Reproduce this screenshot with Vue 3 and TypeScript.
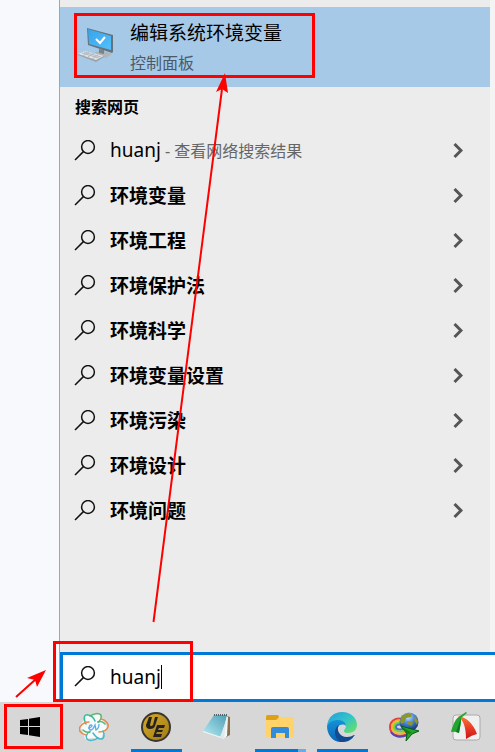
<script setup lang="ts">
import { ref } from 'vue'

interface Suggestion {
  text: string
  note?: string
}

const query = ref('huanj')

const suggestions: Suggestion[] = [
  { text: 'huanj', note: '查看网络搜索结果' },
  { text: '环境变量' },
  { text: '环境工程' },
  { text: '环境保护法' },
  { text: '环境科学' },
  { text: '环境变量设置' },
  { text: '环境污染' },
  { text: '环境设计' },
  { text: '环境问题' },
]
</script>

<template>
  <div class="desktop">
    <main class="workspace">
      <div class="backdrop"></div>
      <section class="panel">
        <div class="results">
          <button class="best" type="button">
            <svg class="best-icon" viewBox="0 0 38 38" aria-hidden="true">
              <defs>
                <linearGradient id="screen" x1="0" y1="0" x2="1" y2="1">
                  <stop offset="0" stop-color="#35a4ec" />
                  <stop offset="1" stop-color="#55c0fa" />
                </linearGradient>
              </defs>
              <path d="M17 24l8-1 9 3-6 4-10-2z" fill="#aeb6bc" />
              <path d="M21 21l5 1v4l-5-1z" fill="#77848d" />
              <path d="M9 0l26 7v17l-1 1L10 17z" fill="#66737d" />
              <path d="M10 1l23 7v14L11 16z" fill="url(#screen)" />
              <path d="M18 11l4 4 5-6" fill="none" stroke="#fff" stroke-width="2" />
              <path d="M0 26l7-3 19 5-8 5z" fill="#dfe3e6" />
              <path d="M0 26l18 6 8-4v1l-8 5L0 27z" fill="#9aa1a8" />
              <path d="M4 25l17 5M6 24l17 5M5 28l6-4M10 29l6-4M14 31l6-4" stroke="#b3b9be" stroke-width="1" fill="none" />
            </svg>
            <span class="best-text">
              <span class="best-title">编辑系统环境变量</span>
              <span class="best-kind">控制面板</span>
            </span>
          </button>
          <h2 class="heading">搜索网页</h2>
          <ul class="list">
            <li v-for="item in suggestions" :key="item.text" class="row">
              <button class="suggestion" type="button">
                <svg class="glass" viewBox="0 0 22 22" aria-hidden="true">
                  <circle cx="14" cy="7" r="6.400" />
                  <path d="M9.400 11.600L1 20" />
                </svg>
                <span v-if="item.note" class="typed">{{ item.text }}<span class="note"> - {{ item.note }}</span></span>
                <span v-else class="completed">{{ item.text }}</span>
              </button>
              <button class="expand" type="button" :aria-label="item.text">
                <svg viewBox="0 0 10 16" aria-hidden="true"><path d="M1.500 1L8 7.500 1.500 14" /></svg>
              </button>
            </li>
          </ul>
        </div>
        <label class="search">
          <svg class="glass" viewBox="0 0 22 22" aria-hidden="true">
            <circle cx="14" cy="7" r="6.400" />
            <path d="M9.400 11.600L1 20" />
          </svg>
          <input v-model="query" class="field" type="text" />
          <span class="caret"></span>
        </label>
      </section>
    </main>

    <nav class="taskbar">
      <button class="start" type="button" aria-label="Start">
        <svg width="20" height="20" viewBox="0 0 20 20" aria-hidden="true">
          <path d="M0 3l8-1v7H0zM9 1.800L20 0v9H9zM0 10h8v8l-8-1zM9 10h11v10L9 18.200z" />
        </svg>
      </button>

      <button class="app" type="button" aria-label="EV">
        <svg viewBox="0 0 30 30" aria-hidden="true">
          <path d="M6 3l7 1 7-2 4 6 4 7-4 6-2 6-8-1-8 1-2-7-3-6 4-6z" fill="#f6fafa" />
          <g fill="none" stroke-width="1.500" stroke-linecap="round">
            <path d="M7 12C4 6 5 2 9 3c3 0 6 3 7 6" stroke="#39b99c" />
            <path d="M11 4c4-3 9-3 11-1 1 3-1 6-3 7" stroke="#55b86b" />
            <path d="M22 7c5 1 8 5 7 8s-5 5-9 5" stroke="#e58a4a" />
            <path d="M24 19c2 4 1 8-2 8s-6-3-8-6" stroke="#45b9c9" />
            <path d="M19 26c-4 3-9 3-11 1s0-6 3-8" stroke="#45b5cf" />
            <path d="M7 23c-5-1-8-5-6-8s5-5 9-5" stroke="#e98a4d" />
            <path d="M19 10c4-1 5 0 7 2M11 20c-3 1-5 0-7-2" stroke="#53b87a" />
          </g>
          <path d="M9 16c4 0 5-3 3-3s-3 5 0 5c2 0 3-3 4-5l1 5c2-1 3-3 3-6" fill="none" stroke="#5aaee6" stroke-width="1.300" />
        </svg>
      </button>

      <button class="app open" type="button" aria-label="UltraEdit">
        <svg viewBox="0 0 30 30" aria-hidden="true">
          <defs>
            <linearGradient id="gold" x1="0" y1="0" x2="1" y2="1">
              <stop offset="0" stop-color="#d6aa26" />
              <stop offset="1" stop-color="#a17b16" />
            </linearGradient>
          </defs>
          <circle cx="15" cy="15" r="15" fill="#39362f" />
          <circle cx="15" cy="15" r="13" fill="url(#gold)" />
          <path d="M8 5h3L9 13q0 1 1 1t2-1l2-8h3l-3 9q-1 3-5 3-4 0-4-4z" fill="#25221d" />
          <path d="M16 13h8l-1 3h-5l-1 2h5l-1 2h-5l-1 2h6l-1 3h-8z" fill="#25221d" />
        </svg>
      </button>

      <button class="app" type="button" aria-label="记事本">
        <svg viewBox="0 0 30 30" aria-hidden="true">
          <defs>
            <linearGradient id="pad" x1="1" y1="0" x2="0" y2="1">
              <stop offset="0" stop-color="#4f9fb6" />
              <stop offset="1" stop-color="#b6edf5" />
            </linearGradient>
          </defs>
          <path d="M24 4l3 1v18l-4 2z" fill="#8a704b" />
          <path d="M23 4l2 1-1 19-4 3z" fill="#f4f7f8" />
          <path d="M11 3h13l-5 22L0 19z" fill="url(#pad)" />
          <path d="M0 19l18 6 5-11-2 13L0 20z" fill="#edf7fa" />
          <path d="M24 5l-3 9-4 11 4 2z" fill="#dfeaf0" />
          <path d="M11 3h14" stroke="#586166" stroke-width="2" stroke-dasharray="1 1" />
        </svg>
      </button>

      <button class="app open grouped" type="button" aria-label="文件资源管理器">
        <svg viewBox="0 0 30 30" aria-hidden="true">
          <path d="M1 5q0-2 2-2h9q2 0 2 3H28q1 0 1 1v17H1z" fill="#ffc94d" />
          <path d="M1 5q0-2 2-2h9q2 0 2 2l-3 3H1z" fill="#dca019" />
          <path d="M1 8h11l3-3h13q1 0 1 1v19H1z" fill="#ffd369" />
          <path d="M6 26V17q0-2 2-2h14q2 0 2 2v9h-4v-5h-9v5z" fill="#328cda" />
        </svg>
      </button>

      <button class="app open" type="button" aria-label="Microsoft Edge">
        <svg viewBox="0 0 30 30" aria-hidden="true">
          <defs>
            <linearGradient id="edge-top" x1="0" y1="0" x2="1" y2="1">
              <stop offset="0" stop-color="#229cde" />
              <stop offset=".5" stop-color="#33c4c8" />
              <stop offset="1" stop-color="#70e457" />
            </linearGradient>
            <linearGradient id="edge-low" x1="0" y1="0" x2="0" y2="1">
              <stop offset="0" stop-color="#1691d9" />
              <stop offset="1" stop-color="#0866b5" />
            </linearGradient>
          </defs>
          <path d="M0 14C1 5 7 0 15 0c9 0 15 6 15 13 0 5-4 8-9 8-4 0-5-2-3-4 3-4-1-8-7-8-5 0-9 2-11 5z" fill="url(#edge-top)" />
          <path d="M0 14c2-4 6-6 11-6 5 0 8 3 8 6-2-2-6-2-8 1-4 6 1 13 8 14-10 4-19-4-19-15z" fill="url(#edge-low)" />
          <path d="M12 13c-3 4 0 12 8 12 3 0 5-1 7-2 1 0 1 0 0 1-3 5-8 6-12 6C8 29 5 17 12 13z" fill="#124b91" />
        </svg>
      </button>

      <button class="app" type="button" aria-label="Internet Download Manager">
        <svg viewBox="0 0 30 30" aria-hidden="true">
          <defs>
            <radialGradient id="globe" cx=".45" cy=".25" r=".75">
              <stop offset="0" stop-color="#c4e0ff" />
              <stop offset=".45" stop-color="#4686df" />
              <stop offset="1" stop-color="#142f6d" />
            </radialGradient>
          </defs>
          <g fill="none" stroke-width="2">
            <path d="M13 7C6 5 1 10 1 15c0 8 9 11 17 7" stroke="#e5413b" />
            <path d="M13 9c-6-2-10 2-10 6 0 6 8 8 15 5" stroke="#f5b52e" />
            <path d="M13 11c-5-1-8 1-8 4 0 4 6 6 13 3" stroke="#72d536" />
            <path d="M13 13c-4-1-6 0-6 2 0 3 5 3 11 1" stroke="#4a70c8" />
            <path d="M2 20c3 5 10 6 16 3" stroke="#5a43b0" />
          </g>
          <circle cx="20" cy="10" r="9.500" fill="url(#globe)" />
          <path d="M11 9l2-5 5-3 5 1-1 3-5 1-1 4-4 2zM18 9l6 1-1 4-5-2zM26 4l3 5-1 4-3-5z" fill="#8d962a" />
          <path d="M12 14l18 5-7 3-6 7 1-7z" fill="#22a525" stroke="#075e17" stroke-width="1" />
          <path d="M13 15l10 6-5 1z" fill="#147a1e" />
        </svg>
      </button>

      <button class="app" type="button" aria-label="FastStone Capture">
        <svg viewBox="0 0 30 30" aria-hidden="true">
          <defs>
            <linearGradient id="red-sail" x1="0" y1="0" x2="0" y2="1">
              <stop offset="0" stop-color="#f97c35" />
              <stop offset=".6" stop-color="#e63422" />
              <stop offset="1" stop-color="#c91518" />
            </linearGradient>
          </defs>
          <rect x="2" y="3" width="27" height="25" rx="3" fill="#f0f0f0" stroke="#aaa" />
          <path d="M7 4C15 5 22 11 26 22q-5 1-11 5C15 16 13 9 7 4z" fill="url(#red-sail)" />
          <path d="M15 0l1 1-6 5c0 5-1 9-2 15q-4-2-8-1C2 12 5 6 9 4z" fill="#25a52e" />
          <path d="M10 6c0 5-1 9-2 15l-3-1z" fill="#087b24" />
        </svg>
      </button>
    </nav>

    <svg class="marks" width="495" height="752" viewBox="0 0 495 752" aria-hidden="true">
      <g fill="none" stroke="#f00" stroke-width="3">
        <rect x="75.500" y="14.500" width="238" height="62" />
        <rect x="54.500" y="642.500" width="137" height="58" />
        <rect x="5.500" y="705.500" width="56" height="42" />
      </g>
      <g fill="none" stroke="#f00" stroke-width="2">
        <path d="M153.500 622L222 89M16 697l20-18" />
      </g>
      <g fill="#f00">
        <path d="M225 73l3 20-6-4-6 3z" />
        <path d="M46 670l-9 17-2-7-8-2z" />
      </g>
    </svg>
  </div>
</template>

<style>
body {
  margin: 0;
}
</style>

<style scoped>
.desktop {
  position: relative;
  display: flex;
  flex-direction: column;
  min-height: 100vh;
  overflow: hidden;
  background: #f7f9fc;
  color: #000;
  font-family: "Noto Sans", "Noto Sans CJK SC", sans-serif;
}

button {
  margin: 0;
  padding: 0;
  border: 0;
  background: none;
  color: inherit;
  font: inherit;
  text-align: left;
}

.workspace {
  display: flex;
  flex: 1;
}

.backdrop {
  width: 59px;
  flex: none;
}

.panel {
  display: flex;
  flex: 1;
  flex-direction: column;
  min-width: 0;
  border-left: 1px solid #a3a5a8;
  background: #f4f4f4;
}

.results {
  flex: 1;
  margin-right: 5px;
  padding-top: 7px;
  background: #ececec;
}

.best {
  display: flex;
  align-items: center;
  gap: 14px;
  width: 100%;
  height: 80px;
  padding-left: 18px;
  background: #a6c9e8;
}

.best-icon {
  width: 38px;
  height: 38px;
}

.best-text {
  display: flex;
  flex-direction: column;
}

.best-title {
  font-size: 19px;
  line-height: 32px;
}

.best-kind {
  color: #4b5a68;
  font-size: 16px;
  line-height: 28px;
}

.heading {
  margin: 0;
  padding-left: 15px;
  font-size: 16px;
  font-weight: 700;
  line-height: 41px;
}

.list {
  margin: 0;
  padding: 0;
  list-style: none;
}

.row {
  display: flex;
  height: 45px;
}

.suggestion {
  display: flex;
  flex: 1;
  align-items: center;
  gap: 14px;
  padding-left: 14px;
  white-space: nowrap;
}

.glass {
  flex: none;
  width: 22px;
  height: 22px;
  fill: none;
  stroke: #111;
  stroke-width: 1.5;
}

.typed {
  font-size: 19px;
  line-height: 28px;
}

.note {
  color: #666;
  font-size: 16px;
}

.completed {
  font-size: 19px;
  font-weight: 700;
  line-height: 28px;
}

.expand {
  display: flex;
  align-items: center;
  justify-content: center;
  width: 64px;
}

.expand svg {
  width: 10px;
  height: 16px;
  fill: none;
  stroke: #555;
  stroke-width: 3;
}

.search {
  display: flex;
  align-items: center;
  box-sizing: border-box;
  height: 50px;
  padding-left: 11px;
  border: 3px solid #0078d7;
  border-right: 0;
  background: #fff;
}

.field {
  field-sizing: content;
  margin-left: 14px;
  padding: 0;
  border: 0;
  outline: 0;
  background: none;
  color: #000;
  font: inherit;
  font-size: 19px;
  line-height: 28px;
}

.caret {
  width: 1px;
  height: 24px;
  background: #000;
}

.taskbar {
  display: flex;
  gap: 11px;
  height: 50px;
  overflow: hidden;
  background: #d7d7d7;
}

.start,
.app {
  display: flex;
  flex: none;
  align-items: center;
  box-sizing: border-box;
}

.start {
  justify-content: center;
  width: 58px;
  padding-left: 2px;
}

.app {
  width: 51px;
  border-bottom: 3px solid transparent;
  padding-top: 3px;
  padding-left: 10px;
}

.app svg {
  width: 30px;
  height: 30px;
}

.open {
  border-bottom-color: #0078d7;
}

.grouped {
  border-image: linear-gradient(to right, #0078d7 80%, #69ade4 80%) 3;
}

.marks {
  position: absolute;
  top: 0;
  left: 0;
  pointer-events: none;
}
</style>
